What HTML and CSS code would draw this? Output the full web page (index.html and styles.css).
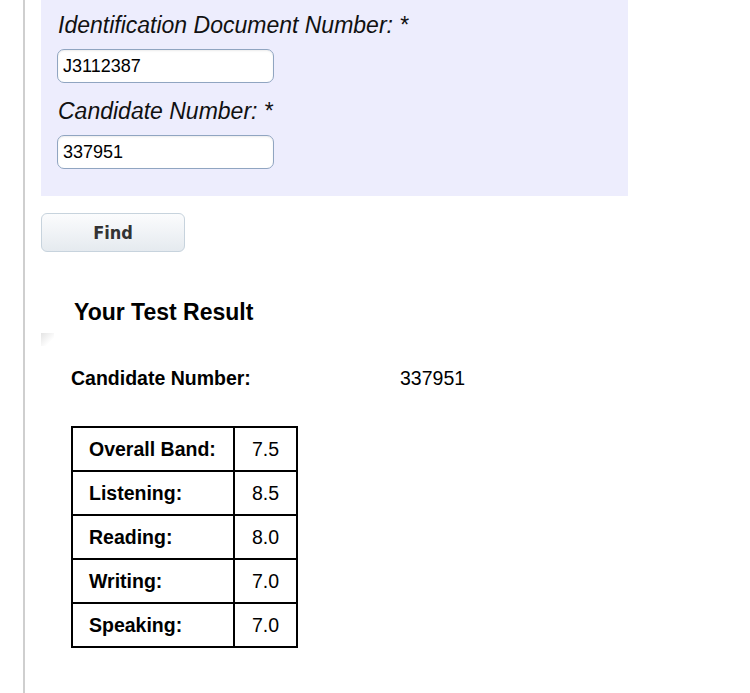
FILE: index.html
```html
<!DOCTYPE html>
<html lang="en">
<head>
    <meta charset="UTF-8">
    <meta name="viewport" content="width=device-width, initial-scale=1.0">
    <title>Test Result</title>
    <link rel="stylesheet" href="styles.css">
</head>
<body>
    <div class="page">
        <form class="search-panel" id="resultForm">
            <label class="field-label" for="docNumber">Identification Document Number: *</label>
            <input class="field-input" type="text" id="docNumber" value="J3112387">
            <label class="field-label second" for="candNumber">Candidate Number: *</label>
            <input class="field-input" type="text" id="candNumber" value="337951">
        </form>

        <button class="find-btn" type="submit" form="resultForm">Find</button>

        <div class="result">
            <h2 class="result-title">Your Test Result</h2>
            <div class="corner"></div>

            <div class="cand-row">
                <span class="cand-label">Candidate Number:</span>
                <span class="cand-value">337951</span>
            </div>

            <table class="scores">
                <tr><td class="score-name">Overall Band:</td><td class="score-val">7.5</td></tr>
                <tr><td class="score-name">Listening:</td><td class="score-val">8.5</td></tr>
                <tr><td class="score-name">Reading:</td><td class="score-val">8.0</td></tr>
                <tr><td class="score-name">Writing:</td><td class="score-val">7.0</td></tr>
                <tr><td class="score-name">Speaking:</td><td class="score-val">7.0</td></tr>
            </table>
        </div>
    </div>
</body>
</html>
```

FILE: styles.css
```css
body {
    margin: 0;
    font-family: "Liberation Sans", Arial, sans-serif;
    color: #000;
    background: #fff;
}

.page {
    margin-left: 23px;
    border-left: 2px solid #cfcfcf;
    min-height: 693px;
    padding-left: 16px;
    box-sizing: border-box;
}

.search-panel {
    width: 587px;
    background-color: #ededfd;
    padding: 14px 0 27px 17px;
    box-sizing: border-box;
}

.field-label {
    display: block;
    font-size: 23px;
    font-style: italic;
    line-height: 23px;
    color: #111;
}

.field-input {
    display: block;
    width: 217px;
    height: 34px;
    margin: 12px 0 0 -1px;
    padding: 0 5px;
    box-sizing: border-box;
    border: 1px solid #90a5c1;
    border-radius: 7px;
    background: #fff;
    font-family: "Liberation Sans", Arial, sans-serif;
    font-size: 18px;
    color: #000;
    box-shadow: inset 0 1px 2px rgba(0, 0, 0, 0.08);
}

.field-input + .field-label {
    margin-top: 17px;
}

.find-btn {
    display: block;
    width: 144px;
    height: 39px;
    margin-top: 17px;
    padding: 0;
    border: 1px solid #c7d3dd;
    border-radius: 6px;
    background: linear-gradient(#fbfcfd, #e5eaef);
    font-family: "DejaVu Sans", Verdana, sans-serif;
    font-stretch: condensed;
    font-weight: bold;
    font-size: 18px;
    color: #333;
    cursor: pointer;
}

.result {
    padding-left: 30px;
}

.result-title {
    margin: 48px 0 0 3px;
    font-size: 23px;
    line-height: 25px;
    font-weight: bold;
}

.corner {
    width: 13px;
    height: 13px;
    margin: 8px 0 0 -30px;
    background: linear-gradient(135deg, #e4e4e4, #fff 70%);
}

.cand-row {
    display: grid;
    grid-template-columns: 329px auto;
    margin-top: 21px;
    font-size: 19.5px;
    line-height: 22px;
}

.cand-label {
    font-weight: bold;
}

.scores {
    margin-top: 37px;
    border: 1px solid #000;
    border-spacing: 0;
    width: 227px;
    font-size: 19.5px;
}

.scores td {
    border: 1px solid #000;
    height: 42px;
    padding: 0;
    vertical-align: middle;
}

.score-name {
    width: 162px;
    padding-left: 16px !important;
    font-weight: bold;
    box-sizing: border-box;
}

.score-val {
    text-align: center;
}
```
